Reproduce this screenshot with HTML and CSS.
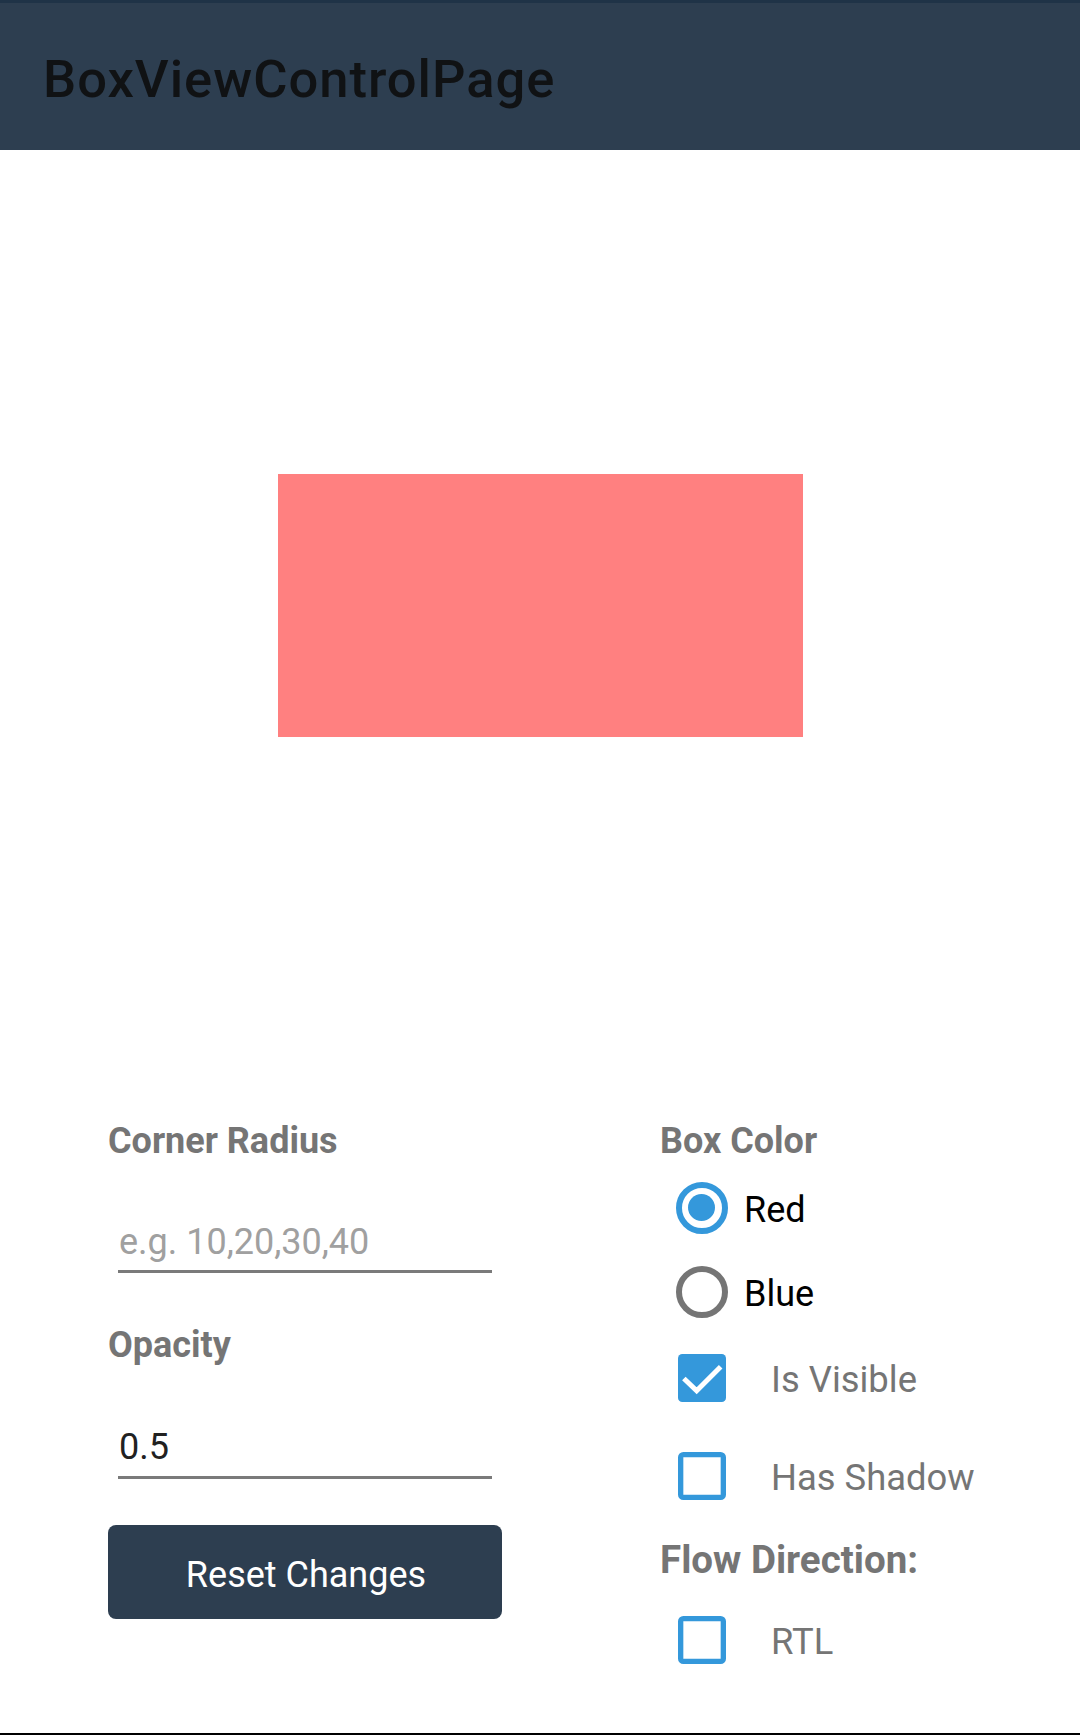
FILE: index.html
```html
<!DOCTYPE html>
<html lang="en">
<head>
<meta charset="utf-8">
<title>BoxViewControlPage</title>
<link rel="stylesheet" href="styles.css">
</head>
<body>
<div class="app">
  <header class="toolbar">
    <h1 class="title">BoxViewControlPage</h1>
  </header>
  <main class="content">
    <section class="preview">
      <div class="box"></div>
    </section>
    <section class="controls">
      <div class="col col-left">
        <div class="label">Corner Radius</div>
        <div class="entry entry-first"><span class="placeholder">e.g. 10,20,30,40</span></div>
        <div class="label label-opacity">Opacity</div>
        <div class="entry entry-second"><span class="value">0.5</span></div>
        <button class="reset" type="button">Reset Changes</button>
      </div>
      <div class="col col-right">
        <div class="label label-right">Box Color</div>
        <div class="radio-row row-red"><span class="radio checked"></span><span class="radio-text">Red</span></div>
        <div class="radio-row row-blue"><span class="radio"></span><span class="radio-text">Blue</span></div>
        <div class="check-row row-visible">
          <svg class="checkbox" viewBox="0 0 18 18" width="48" height="48"><rect x="0" y="0" width="18" height="18" rx="1.6" fill="#3498db"/><path d="M2.2 9.2 L7 13.8 L16 4.8" fill="none" stroke="#fff" stroke-width="1.9"/></svg>
          <span class="check-text">Is Visible</span>
        </div>
        <div class="check-row row-shadow">
          <svg class="checkbox" viewBox="0 0 18 18" width="48" height="48"><rect x="1" y="1" width="16" height="16" rx="1" fill="none" stroke="#3498db" stroke-width="2"/></svg>
          <span class="check-text">Has Shadow</span>
        </div>
        <div class="label label-right label-flow">Flow Direction:</div>
        <div class="check-row row-rtl">
          <svg class="checkbox" viewBox="0 0 18 18" width="48" height="48"><rect x="1" y="1" width="16" height="16" rx="1" fill="none" stroke="#3498db" stroke-width="2"/></svg>
          <span class="check-text">RTL</span>
        </div>
      </div>
    </section>
  </main>
</div>
</body>
</html>
```

FILE: styles.css
```css
* {
  box-sizing: border-box;
}

html, body {
  margin: 0;
  padding: 0;
  background: #ffffff;
}

body {
  font-family: Roboto, "Noto Sans", "Liberation Sans", sans-serif;
}

.app {
  width: 1080px;
  height: 1735px;
  display: flex;
  flex-direction: column;
}

.toolbar {
  height: 150px;
  border-top: 3px solid #1f3347;
  background: #2d3e50;
  padding: 46px 0 0 43px;
}

.title {
  margin: 0;
  font-weight: 500;
  font-size: 52.5px;
  line-height: 60px;
  letter-spacing: 1px;
  color: #101214;
}

.content {
  flex: 1;
  display: flex;
  flex-direction: column;
}

.preview {
  height: 911px;
  display: flex;
  align-items: center;
  justify-content: center;
}

.box {
  width: 525px;
  height: 263px;
  background: #ff8080;
}

.controls {
  flex: 1;
  display: flex;
  padding: 58px 0 0 108px;
  border-bottom: 2px solid #000;
}

.col {
  display: flex;
  flex-direction: column;
}

.col-left {
  width: 394px;
}

.col-right {
  margin-left: 160px;
}

.label {
  font-weight: 700;
  font-size: 36px;
  line-height: 44px;
  color: #757575;
}

.label-right {
  margin-left: -2px;
}

.entry {
  margin-left: 10px;
  width: 374px;
  border-bottom: 3px solid #7a7a7a;
  font-size: 36px;
  line-height: 44px;
  padding-left: 1px;
}

.entry-first {
  margin-top: 57px;
  padding-bottom: 6px;
}

.entry-second {
  margin-top: 58px;
  padding-bottom: 7px;
}

.placeholder {
  color: #a0a0a0;
}

.value {
  color: #212121;
}

.label-opacity {
  margin-top: 50px;
}

.reset {
  margin-top: 46px;
  width: 394px;
  height: 94px;
  border: none;
  border-radius: 8px;
  background: #2d3e50;
  color: #ffffff;
  font-family: Roboto, "Noto Sans", "Liberation Sans", sans-serif;
  font-size: 36px;
  padding: 6px 0 0 2px;
}

.radio-row,
.check-row {
  display: flex;
  align-items: center;
}

.radio-row {
  height: 52px;
}

.row-red {
  margin-top: 19px;
}

.row-blue {
  margin-top: 32px;
}

.radio {
  position: relative;
  width: 52px;
  height: 52px;
  margin-left: 14px;
  border-radius: 50%;
  border: 6.5px solid #757575;
}

.radio.checked {
  border-color: #3498db;
}

.radio.checked::after {
  content: "";
  position: absolute;
  left: 6px;
  top: 6px;
  width: 27px;
  height: 27px;
  border-radius: 50%;
  background: #3498db;
}

.radio-text {
  margin-left: 16px;
  font-size: 36px;
  line-height: 44px;
  padding-top: 3px;
  color: #000000;
}

.check-row {
  height: 48px;
}

.checkbox {
  display: block;
  margin-left: 16px;
  flex: none;
}

.check-text {
  margin-left: 45px;
  font-size: 36.4px;
  line-height: 44px;
  padding-top: 4px;
  color: #757575;
}

.row-visible {
  margin-top: 36px;
}

.row-shadow {
  margin-top: 50px;
}

.label-flow {
  margin-top: 38px;
  font-size: 38.5px;
}

.row-rtl {
  margin-top: 34px;
}
```
